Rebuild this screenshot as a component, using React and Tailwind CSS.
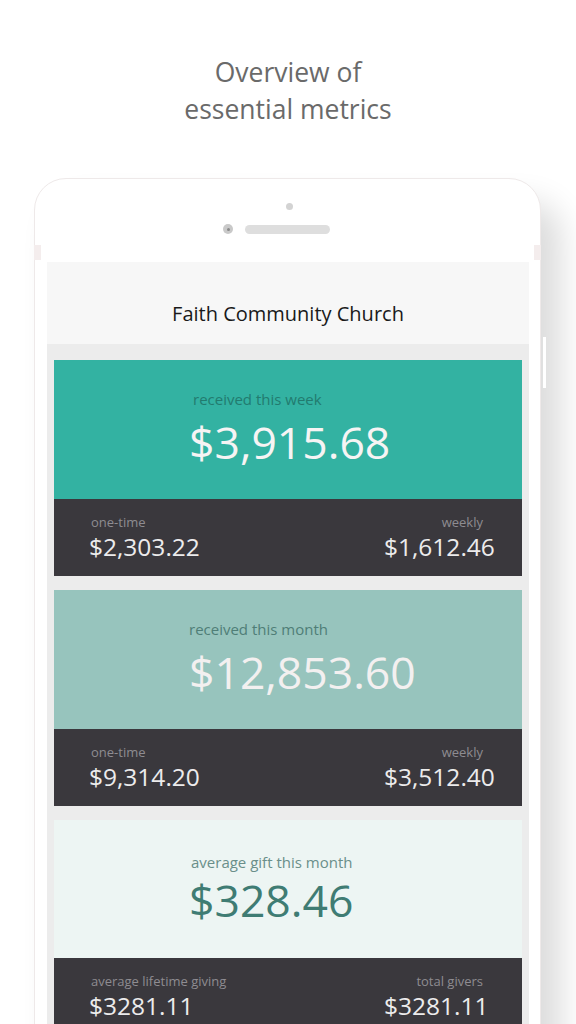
const cards = [
  {
    label: "received this week",
    value: "$3,915.68",
    top: "bg-[#33b2a2] pt-[29px] pb-[32px]",
    labelCls: "text-[#227b6f] pl-[4px]",
    valueCls: "text-[#f6f4f4] mt-[8px]",
    left: ["one-time", "$2,303.22"],
    right: ["weekly", "$1,612.46"],
  },
  {
    label: "received this month",
    value: "$12,853.60",
    top: "bg-[#97c4bd] pt-[29px] pb-[32px]",
    labelCls: "text-[#4f7e77] pl-0",
    valueCls: "text-[#f3f0f0] mt-[8px]",
    left: ["one-time", "$9,314.20"],
    right: ["weekly", "$3,512.40"],
  },
  {
    label: "average gift this month",
    value: "$328.46",
    top: "bg-[#edf5f3] pt-[32px] pb-[33px]",
    labelCls: "text-[#6a8f8a] pl-[2px]",
    valueCls: "text-[#3f7c73] mt-[3px]",
    left: ["average lifetime giving", "$3281.11"],
    right: ["total givers", "$3281.11"],
  },
];

function Card({ c }) {
  return (
    <div className="flex flex-col">
      <div className={`flex flex-col items-start pl-[135px] ${c.top}`}>
        <div className={`text-[15px] leading-[20px] whitespace-nowrap ${c.labelCls}`}>{c.label}</div>
        <div className={`text-[44.5px] leading-[50px] whitespace-nowrap ${c.valueCls}`}>{c.value}</div>
      </div>
      <div className="bg-[#3a383d] flex justify-between pl-[35px] pr-[39px] pt-[14px] pb-[14px]">
        <div className="flex flex-col">
          <div className="text-[13px] leading-[18px] text-[#8e8c91] ml-[2px] whitespace-nowrap">{c.left[0]}</div>
          <div className="text-[24.5px] leading-[30px] mt-[1px] text-[#ecebec] whitespace-nowrap">{c.left[1]}</div>
        </div>
        <div className="flex flex-col w-[99px]">
          <div className="text-[13px] leading-[18px] text-[#8e8c91] text-right whitespace-nowrap">{c.right[0]}</div>
          <div className="text-[24.5px] leading-[30px] mt-[1px] text-[#ecebec] whitespace-nowrap">{c.right[1]}</div>
        </div>
      </div>
    </div>
  );
}

export default function App() {
  return (
    <div className="w-[576px] h-[1024px] overflow-hidden bg-white font-['Open_Sans',sans-serif] flex flex-col">
      <div className="mt-[54px] text-center text-[26.5px] leading-[37px] text-[#6a6a6a]">
        <div>Overview of</div>
        <div>essential metrics</div>
      </div>

      <div className="relative mt-[50px] ml-[34px] w-[507px] h-[900px] shrink-0 bg-white border border-[#eee9e9] rounded-t-[32px] shadow-[20px_24px_32px_0px_rgba(0,0,0,0.14)]">
        <div className="absolute left-[-1px] top-[66px] w-[7px] h-[15px] bg-[#f4eded]" />
        <div className="absolute right-[-1px] top-[66px] w-[7px] h-[15px] bg-[#f4eded]" />
        <div className="absolute right-[-6px] top-[158px] w-[3px] h-[51px] bg-white" />

        <div className="h-[83px] flex flex-col items-center">
          <div className="mt-[24px] ml-[3px] w-[7px] h-[7px] rounded-full bg-[#d3d3d3]" />
          <div className="mt-[14px] flex items-center">
            <div className="w-[10px] h-[10px] rounded-full bg-[#c9c9c9] flex items-center justify-center">
              <div className="w-[3px] h-[3px] rounded-full bg-[#8a8a8a]" />
            </div>
            <div className="ml-[12px] w-[85px] h-[9px] rounded-full bg-[#dedede]" />
            <div className="ml-[12px] w-[10px] h-[10px]" />
          </div>
        </div>

        <div className="ml-[12px] mr-[11px] flex flex-col">
          <div className="bg-[#f7f7f7] h-[82px] pt-[38px] text-center text-[20px] leading-[28px] text-[#1a1a1a]">
            Faith Community Church
          </div>
          <div className="bg-[#ececec] px-[7px] pt-[16px] flex flex-col gap-[14px] pb-[40px]">
            {cards.map((c, i) => (
              <Card key={i} c={c} />
            ))}
          </div>
        </div>
      </div>
    </div>
  );
}
